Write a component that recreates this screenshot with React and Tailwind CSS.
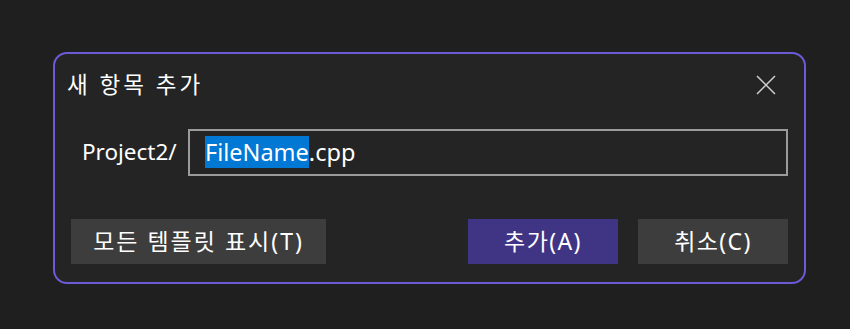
export default function App() {
  const font = { fontFamily: '"Noto Sans", "Noto Sans CJK KR", sans-serif' };
  return (
    <div className="h-[329px] w-[850px] bg-[#1f1f1f] pl-[53px] pt-[52px]" style={font}>
      <div className="flex h-[232px] w-[753px] flex-col rounded-[14px] border-2 border-[#6b5bd6] bg-[#242424] text-white">
        <div className="flex h-[62px] items-center justify-between pl-3 pr-[28px]">
          <h1 className="text-[22.5px] leading-none tracking-[3px]">새 항목 추가</h1>
          <svg width="20" height="20" viewBox="0 0 20 20" className="text-[#cfcfcf]">
            <path d="M1 1 L19 19 M19 1 L1 19" stroke="currentColor" strokeWidth="1.5" fill="none" />
          </svg>
        </div>
        <div className="mt-[13px] flex items-center pl-[27px]">
          <span className="w-[106px] text-[22.5px] leading-none">Project2/</span>
          <div className="flex h-[47px] w-[600px] items-center border-2 border-[#9b9b9b] pl-[15px]">
            <span className="text-[23.5px] leading-[31px]">
              <span className="bg-[#0078d4]">FileName</span>.cpp
            </span>
          </div>
        </div>
        <div className="mt-[43px] flex items-center justify-between px-4">
          <button className="h-[45px] w-[255px] bg-[#3d3d3d] text-[23px] leading-none tracking-[2px]">모든 템플릿 표시(T)</button>
          <div className="flex gap-5">
            <button className="h-[45px] w-[150px] bg-[#403585] text-[23px] leading-none tracking-[1.4px]">추가(A)</button>
            <button className="h-[45px] w-[150px] bg-[#3d3d3d] text-[23px] leading-none tracking-[1.4px]">취소(C)</button>
          </div>
        </div>
      </div>
    </div>
  );
}
